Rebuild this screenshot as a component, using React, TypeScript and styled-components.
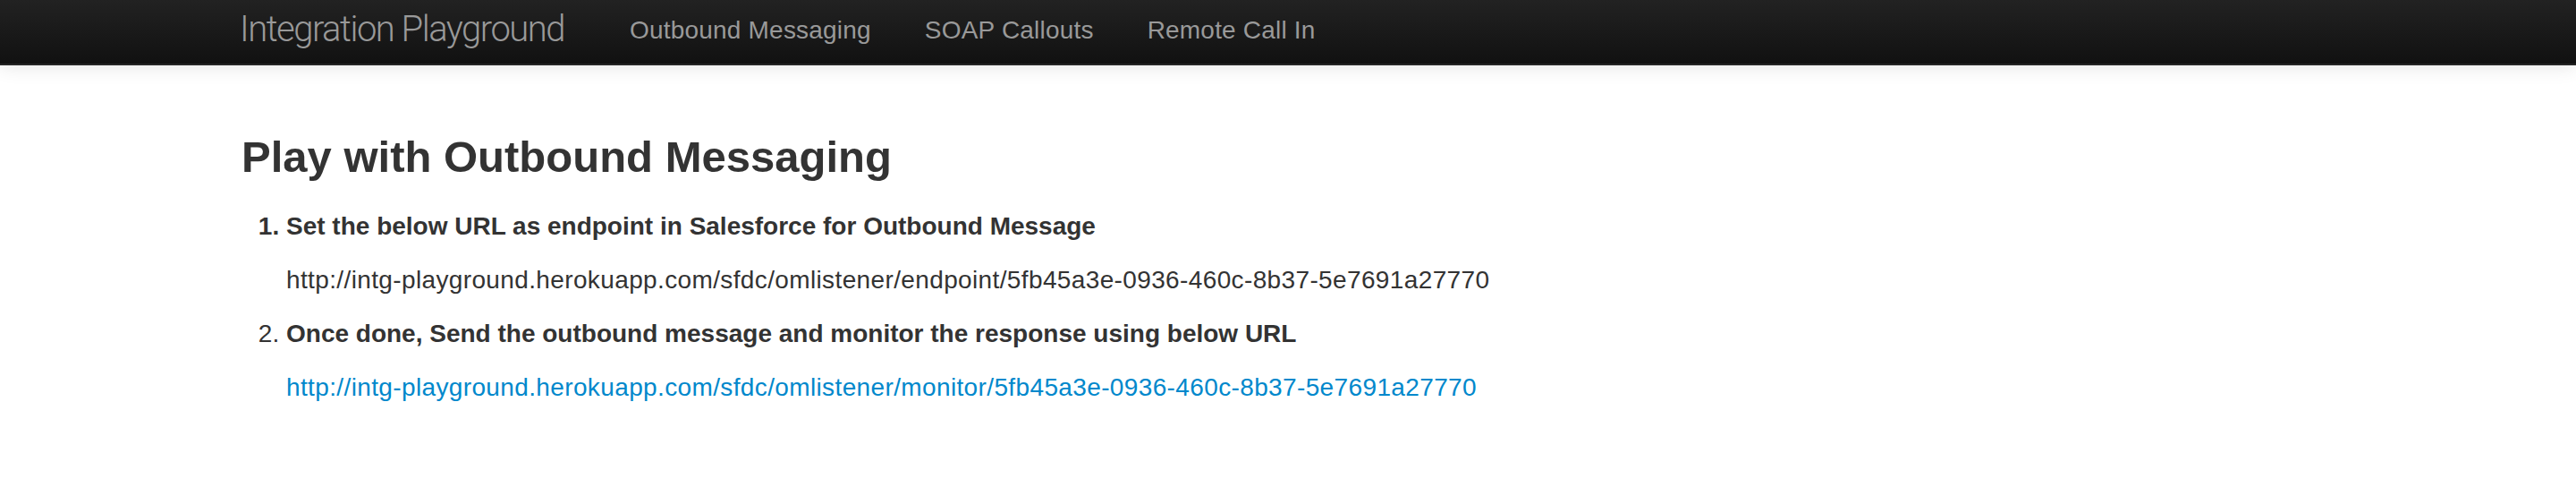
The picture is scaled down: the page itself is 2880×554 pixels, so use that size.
import React from "react";
import styled, { createGlobalStyle } from "styled-components";

type Step = {
  title: string;
  url: string;
  link: boolean;
};

const steps: Step[] = [
  {
    title: "Set the below URL as endpoint in Salesforce for Outbound Message",
    url: "http://intg-playground.herokuapp.com/sfdc/omlistener/endpoint/5fb45a3e-0936-460c-8b37-5e7691a27770",
    link: false,
  },
  {
    title: "Once done, Send the outbound message and monitor the response using below URL",
    url: "http://intg-playground.herokuapp.com/sfdc/omlistener/monitor/5fb45a3e-0936-460c-8b37-5e7691a27770",
    link: true,
  },
];

const navLinks = ["Outbound Messaging", "SOAP Callouts", "Remote Call In"];

const GlobalStyle = createGlobalStyle`
  html, body {
    margin: 0;
    padding: 0;
    background: #fff;
  }

  body {
    font-family: "Liberation Sans", Arial, Helvetica, sans-serif;
    font-size: 28px;
    line-height: 40px;
    color: #333;
  }
`;

const Navbar = styled.header`
  height: 71px;
  background: linear-gradient(to bottom, #222222, #111111);
  border-bottom: 2px solid #252525;
  box-shadow: 0 2px 20px rgba(0, 0, 0, 0.1);
`;

const NavInner = styled.div`
  display: flex;
  align-items: center;
  height: 100%;
  padding-left: 268px;
`;

const Brand = styled.a`
  font-family: Roboto, "Liberation Sans", sans-serif;
  font-weight: 300;
  font-size: 40px;
  line-height: 40px;
  letter-spacing: -1.5px;
  color: #999;
  text-decoration: none;
  margin-right: 43px;
  margin-top: -6px;
`;

const NavList = styled.nav`
  display: flex;
  align-items: center;
  margin-top: -3px;
`;

const NavLink = styled.a`
  padding: 0 30px;
  color: #999;
  text-decoration: none;
  font-size: 28px;
  line-height: 40px;
  letter-spacing: 0.2px;
`;

const Main = styled.main`
  padding: 62px 0 0 270px;
`;

const Heading = styled.h3`
  margin: 0 0 18px;
  font-size: 49px;
  line-height: 80px;
  font-weight: bold;
  color: #333;
`;

const Steps = styled.ol`
  margin: 0 0 0 50px;
  padding: 0;
`;

const StepItem = styled.li<{ $boldMarker: boolean }>`
  &::marker {
    font-weight: ${({ $boldMarker }) => ($boldMarker ? "bold" : "normal")};
  }
`;

const StepTitle = styled.p`
  margin: 0 0 20px;
  font-weight: bold;
`;

const StepUrl = styled.p`
  margin: 0 0 20px;
  letter-spacing: 0.37px;
`;

const UrlLink = styled.a`
  color: #0088cc;
  text-decoration: none;
`;

export default function App() {
  return (
    <>
      <GlobalStyle />
      <Navbar>
        <NavInner>
          <Brand href="#">Integration Playground</Brand>
          <NavList>
            {navLinks.map((label) => (
              <NavLink key={label} href="#">
                {label}
              </NavLink>
            ))}
          </NavList>
        </NavInner>
      </Navbar>
      <Main>
        <Heading>Play with Outbound Messaging</Heading>
        <Steps>
          {steps.map((step, i) => (
            <StepItem key={step.url} $boldMarker={i === 0}>
              <StepTitle>{step.title}</StepTitle>
              <StepUrl>
                {step.link ? <UrlLink href="#">{step.url}</UrlLink> : step.url}
              </StepUrl>
            </StepItem>
          ))}
        </Steps>
      </Main>
    </>
  );
}
